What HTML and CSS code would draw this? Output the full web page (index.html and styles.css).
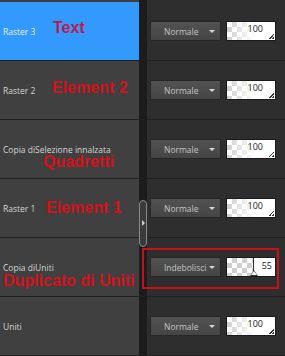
FILE: index.html
```html
<!DOCTYPE html>
<html lang="en">
<head>
    <meta charset="UTF-8">
    <title>Livelli</title>
    <link rel="stylesheet" href="styles.css">
</head>
<body>
    <div id="panel">
        <div class="names">
            <div class="layer selected">
                <span class="name">Raster 3</span>
                <span class="note note-text">Text</span>
            </div>
            <div class="layer">
                <span class="name">Raster 2</span>
                <span class="note note-el2">Element 2</span>
            </div>
            <div class="layer">
                <span class="name">Copia diSelezione innalzata</span>
                <span class="note note-quad">Quadretti</span>
            </div>
            <div class="layer">
                <span class="name">Raster 1</span>
                <span class="note note-el1">Element 1</span>
            </div>
            <div class="layer">
                <span class="name">Copia diUniti</span>
                <span class="note note-dup">Duplicato di Uniti</span>
            </div>
            <div class="layer">
                <span class="name">Uniti</span>
            </div>
        </div>

        <div class="splitter">
            <div class="handle"><span class="arrow"></span></div>
        </div>

        <div class="props">
            <div class="prop">
                <div class="blend">Normale<span class="caret"></span></div>
                <div class="opacity"><span class="value">100</span><span class="grip"></span></div>
            </div>
            <div class="prop">
                <div class="blend">Normale<span class="caret"></span></div>
                <div class="opacity"><span class="value">100</span><span class="grip"></span></div>
            </div>
            <div class="prop">
                <div class="blend">Normale<span class="caret"></span></div>
                <div class="opacity"><span class="value">100</span><span class="grip"></span></div>
            </div>
            <div class="prop">
                <div class="blend">Normale<span class="caret"></span></div>
                <div class="opacity"><span class="value">100</span><span class="grip"></span></div>
            </div>
            <div class="prop">
                <div class="mark"></div>
                <div class="blend">Indebolisci<span class="caret"></span></div>
                <div class="opacity slider">
                    <div class="filled" style="width: 55%;"><span class="thumb"></span></div>
                    <span class="value">55</span>
                </div>
            </div>
            <div class="prop">
                <div class="blend">Normale<span class="caret"></span></div>
                <div class="opacity"><span class="value">100</span><span class="grip"></span></div>
            </div>
        </div>
    </div>
</body>
</html>
```

FILE: styles.css
```css
body {
    margin: 0;
    background: #1e1e1e;
    font-family: 'Open Sans', sans-serif;
    overflow: hidden;
}
#panel {
    display: flex;
    height: 356px;
    width: 285px;
}
.names {
    width: 139px;
    padding-top: 2px;
    background: #3e3e3e;
}
.props {
    flex: 1;
    padding-top: 2px;
    background: #2e2e2e;
}
.layer, .prop {
    height: 58px;
    border-bottom: 1px solid #1f1f1f;
    display: flex;
    align-items: center;
    position: relative;
}
.layer {
    padding-left: 3px;
    background: #404040;
}
.layer.selected {
    background: #3399ff;
}
.name {
    font-size: 8.5px;
    color: #d4d4d4;
    white-space: nowrap;
}
.selected .name {
    color: #e6efff;
}
.note {
    position: absolute;
    font-family: 'Liberation Sans', Arial, sans-serif;
    font-weight: bold;
    font-size: 16px;
    line-height: 16px;
    color: #d4121c;
    white-space: nowrap;
}
.selected .note {
    color: #bc1a4c;
}
.note-text { left: 53px; top: 18px; }
.note-el2 { left: 52px; top: 19px; }
.note-quad { left: 43px; top: 34px; }
.note-el1 { left: 46px; top: 21px; }
.note-dup { left: 3px; top: 35px; }

.splitter {
    width: 8px;
    position: relative;
    background: #1c1c1c;
}
.handle {
    position: absolute;
    left: 0;
    top: 200px;
    width: 6px;
    height: 45px;
    border: 1px solid #8a8a8a;
    border-radius: 4px;
    background: #3a3a3a;
}
.arrow {
    position: absolute;
    left: 2px;
    top: 19px;
    border-left: 3px solid #d0d0d0;
    border-top: 3px solid transparent;
    border-bottom: 3px solid transparent;
}

.prop {
    padding-left: 3px;
    gap: 5px;
}
.blend {
    width: 71px;
    height: 20px;
    box-sizing: border-box;
    border: 1px solid #262626;
    border-radius: 1px;
    background: linear-gradient(#525252, #454545);
    color: #c4c4c4;
    font-size: 8.5px;
    display: flex;
    align-items: center;
    padding-left: 13px;
    position: relative;
}
.caret {
    position: absolute;
    right: 5px;
    top: 8px;
    border-top: 3px solid #d8d8d8;
    border-left: 3px solid transparent;
    border-right: 3px solid transparent;
}
.opacity {
    width: 50px;
    height: 20px;
    box-sizing: border-box;
    border: 1px solid #1a1a1a;
    position: relative;
    background:
        linear-gradient(to right, rgba(255,255,255,0) 0%, rgba(255,255,255,0.6) 35%, #fff 60%),
        conic-gradient(#cfcfcf 25%, #fff 0 50%, #cfcfcf 0 75%, #fff 0) 0 0 / 10px 10px;
}
.value {
    position: absolute;
    right: 12px;
    top: 1px;
    font-size: 9px;
    line-height: 12px;
    color: #1a1a1a;
}
.grip {
    position: absolute;
    right: 1px;
    bottom: 1px;
    width: 5px;
    height: 5px;
    background: linear-gradient(135deg, transparent 45%, #333 45% 60%, transparent 60% 75%, #333 75%);
}
.slider {
    background: #fff;
}
.slider .filled {
    position: absolute;
    left: 0;
    top: 0;
    bottom: 0;
    border-right: 1px solid #333;
    background: conic-gradient(#cfcfcf 25%, #fff 0 50%, #cfcfcf 0 75%, #fff 0) 0 0 / 10px 10px;
}
.thumb {
    position: absolute;
    right: -5px;
    bottom: 0;
    border-bottom: 6px solid #333;
    border-left: 4px solid transparent;
    border-right: 4px solid transparent;
}
.thumb::after {
    content: "";
    position: absolute;
    left: -3px;
    top: 1px;
    border-bottom: 4px solid #fff;
    border-left: 3px solid transparent;
    border-right: 3px solid transparent;
}
.slider .value {
    right: 3px;
    top: 2px;
}
.mark {
    position: absolute;
    left: -5px;
    top: 10px;
    width: 137px;
    height: 41px;
    box-sizing: border-box;
    border: 2px solid #c8101a;
}
```
